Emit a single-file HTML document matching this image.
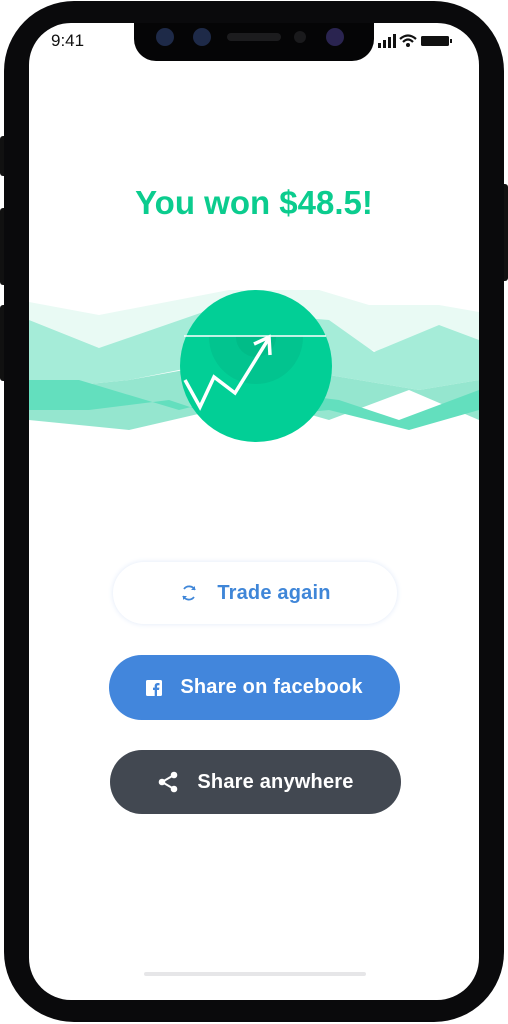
<!DOCTYPE html>
<html><head><meta charset="utf-8"><style>
html,body{margin:0;padding:0;width:508px;height:1024px;background:#fff;overflow:hidden;font-family:"Liberation Sans",sans-serif}
.phone{position:absolute;left:4px;top:1px;width:500px;height:1021px;background:#0a0a0c;border-radius:70px}
.btn{position:absolute;background:#111;border-radius:3px}
.screen{position:absolute;left:29px;top:23px;width:450px;height:977px;background:#fff;border-radius:42px;overflow:hidden}
.notch{position:absolute;left:105px;top:-2px;width:240px;height:40px;background:#050506;border-radius:0 0 22px 22px}
.b{position:absolute;border-radius:36px;display:flex;align-items:center;justify-content:center;font-size:20px;font-weight:bold;letter-spacing:0.2px}
</style></head><body>
<div class="btn" style="left:0;top:136px;width:8px;height:40px"></div>
<div class="btn" style="left:0;top:208px;width:8px;height:77px"></div>
<div class="btn" style="left:0;top:305px;width:8px;height:76px"></div>
<div class="btn" style="left:499px;top:184px;width:9px;height:97px"></div>
<div class="phone"></div>
<div class="screen">
 <div class="notch">
  <div style="position:absolute;left:22px;top:7px;width:18px;height:18px;border-radius:50%;background:#1e2a48"></div>
  <div style="position:absolute;left:59px;top:7px;width:18px;height:18px;border-radius:50%;background:#1e2a48"></div>
  <div style="position:absolute;left:93px;top:12px;width:54px;height:8px;border-radius:4px;background:#1c1c1e"></div>
  <div style="position:absolute;left:160px;top:10px;width:12px;height:12px;border-radius:50%;background:#1a1a1c"></div>
  <div style="position:absolute;left:192px;top:7px;width:18px;height:18px;border-radius:50%;background:#2a2450"></div>
 </div>
 <div style="position:absolute;left:22px;top:8px;font-size:17px;color:#111">9:41</div>
 <svg style="position:absolute;left:349px;top:10px" width="84" height="18" viewBox="0 0 84 18">
  <rect x="0" y="10" width="3" height="5" fill="#111"/><rect x="5" y="7" width="3" height="8" fill="#111"/><rect x="10" y="4" width="3" height="11" fill="#111"/><rect x="15" y="1" width="3" height="14" fill="#111"/>
  <path d="M22 6 Q30 -1 38 6" stroke="#111" stroke-width="2.2" fill="none"/><path d="M25 9 Q30 4 35 9" stroke="#111" stroke-width="2.2" fill="none"/><circle cx="30" cy="12" r="2" fill="#111"/>
  <rect x="43" y="3" width="28" height="10" rx="1.5" fill="#111"/><rect x="72" y="6" width="2" height="4" fill="#111"/>
 </svg>
 <div style="position:absolute;left:0;width:450px;top:161px;text-align:center;color:#0bcc8e;font-size:33px;font-weight:bold">You won $48.5!</div>
 <svg style="position:absolute;left:0;top:257px" width="450" height="170" viewBox="0 0 450 170">
  <defs><clipPath id="c"><rect x="0" y="56" width="450" height="120"/></clipPath></defs>
  <polygon points="0,22 70,35 200,10 290,10 340,25 410,25 450,32 450,62 410,48 350,72 290,55 210,65 130,72 70,68 0,42" fill="#e9faf4"/>
  <polygon points="0,40 70,68 180,30 300,40 345,72 410,45 450,60 450,100 390,110 300,95 200,80 100,100 0,110" fill="#a5ecd8"/>
  <polygon points="0,110 100,100 210,80 300,95 390,110 450,100 450,140 380,110 300,140 230,120 100,150 0,140" fill="#95e6cf"/>
  <polygon points="0,100 50,100 150,130 230,110 310,120 370,140 450,110 450,130 380,150 300,130 200,140 140,120 60,130 0,130" fill="#63dfbe"/>
  <circle cx="227" cy="86" r="76" fill="#02cf96"/>
  <g clip-path="url(#c)">
  <circle cx="227" cy="57" r="47" fill="#02c18d" opacity="0.8"/>
  <circle cx="227" cy="57" r="20" fill="#02b884" opacity="0.6"/>
  </g>
  <line x1="155" y1="56" x2="297" y2="56" stroke="#fff" stroke-width="1.5"/>
  <polyline points="156,100 171,127 185,97 206,113 240,58" fill="none" stroke="#fff" stroke-width="3.5"/>
  <polyline points="225,64 240,57 241,75" fill="none" stroke="#fff" stroke-width="3.5"/>
 </svg>
 <div class="b" style="left:84px;top:539px;width:284px;height:62px;background:#fff;box-shadow:0 0 6px #e0e9f8;color:#3f86d8">
  <svg width="20" height="20" viewBox="0 0 20 20" style="margin-right:18px"><path d="M5 6 A6.5 6.5 0 0 1 16 7" fill="none" stroke="#3f86d8" stroke-width="1.8"/><path d="M16 3v4h-4" fill="#3f86d8"/><path d="M15 14 A6.5 6.5 0 0 1 4 13" fill="none" stroke="#3f86d8" stroke-width="1.8"/><path d="M4 17v-4h4" fill="#3f86d8"/></svg>Trade again</div>
 <div class="b" style="left:80px;top:632px;width:291px;height:65px;background:#4286dc;color:#fff">
  <svg width="16" height="16" viewBox="0 0 16 16" style="margin-right:18px"><rect width="16" height="16" rx="1.5" fill="#fff"/><path d="M11 16V10h2l.4-2.4H11V6.3c0-.7.3-1.1 1.2-1.1h1.3V3.1C13.2 3 12.5 3 11.8 3 10 3 8.7 4 8.7 6V7.6H7V10h1.7v6z" fill="#4286dc"/></svg>Share on facebook</div>
 <div class="b" style="left:81px;top:727px;width:291px;height:64px;background:#424851;color:#fff">
  <svg width="22" height="22" viewBox="0 0 22 22" style="margin-right:18px"><circle cx="17" cy="4" r="3.3" fill="#fff"/><circle cx="5" cy="11" r="3.3" fill="#fff"/><circle cx="17" cy="18" r="3.3" fill="#fff"/><path d="M17 4L5 11L17 18" stroke="#fff" stroke-width="2" fill="none"/></svg>Share anywhere</div>
 <div style="position:absolute;left:115px;top:949px;width:222px;height:4px;border-radius:2px;background:#e6e6e8"></div>
</div>
</body></html>
